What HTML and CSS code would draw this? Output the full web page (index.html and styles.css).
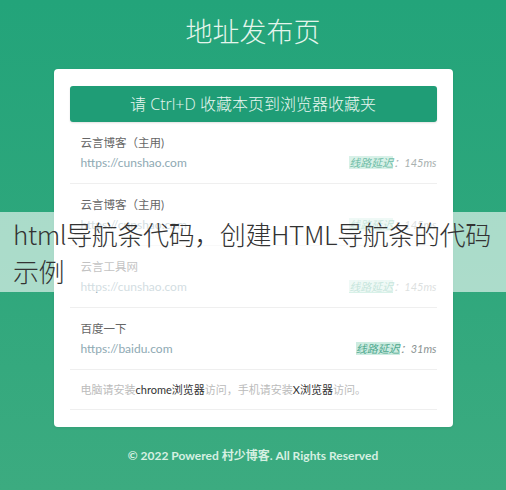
FILE: index.html
```html
<!DOCTYPE html>
<html lang="zh">
<head>
<meta charset="utf-8">
<title>地址发布页</title>
<link rel="stylesheet" href="styles.css">
</head>
<body>
<div class="page">
  <header class="title">地址发布页</header>
  <main class="card">
    <div class="btn">请 Ctrl+D 收藏本页到浏览器收藏夹</div>
    <div class="row">
      <div class="name">云言博客（主用)</div>
      <div class="line"><span class="url">https://cunshao.com</span><span class="lat"><span class="tag">线路延迟</span>：145ms</span></div>
    </div>
    <div class="row">
      <div class="name">云言博客（主用)</div>
      <div class="line"><span class="url">https://cunshao.com</span><span class="lat"><span class="tag">线路延迟</span>：145ms</span></div>
    </div>
    <div class="row">
      <div class="name">云言工具网</div>
      <div class="line"><span class="url">https://cunshao.com</span><span class="lat"><span class="tag">线路延迟</span>：145ms</span></div>
    </div>
    <div class="row">
      <div class="name">百度一下</div>
      <div class="line"><span class="url">https://baidu.com</span><span class="lat strong"><span class="tag">线路延迟</span>：31ms</span></div>
    </div>
    <div class="note">电脑请安装<b>chrome浏览器</b>访问，手机请安装<b>X浏览器</b>访问。</div>
  </main>
  <footer class="foot">© 2022 Powered 村少博客. All Rights Reserved</footer>
  <div class="overlay">html导航条代码，创建HTML导航条的代码示例</div>
</div>
</body>
</html>
```
FILE: styles.css
```css
html, body {
  margin: 0;
  padding: 0;
}
body {
  width: 506px;
  height: 490px;
  overflow: hidden;
  font-family: Lato, "Noto Sans CJK SC", sans-serif;
  background: linear-gradient(180deg, #23a47a 0%, #2ea77c 50%, #3cab80 100%);
}
.page {
  position: relative;
  height: 490px;
  display: flex;
  flex-direction: column;
  align-items: center;
}
.title {
  height: 69px;
  line-height: 62px;
  font-size: 27px;
  color: #e4f5ec;
  font-family: "Noto Sans CJK SC", sans-serif;
  font-weight: 300;
}
.card {
  width: 367px;
  background: #fff;
  border-radius: 4px;
  padding: 17px 16px 17px 16px;
  box-shadow: 0 1px 3px rgba(0,0,0,0.08);
}
.btn {
  height: 36px;
  line-height: 36px;
  background: #1f9d76;
  border-radius: 3px;
  color: #e9f7f1;
  font-size: 16px;
  text-align: center;
  box-shadow: 0 1px 2px rgba(0,0,0,0.12);
  font-family: "Open Sans", "Noto Sans CJK SC", sans-serif;
  font-weight: 300;
}
.row {
  height: 62px;
  box-sizing: border-box;
  padding: 13px 0 13px 11px;
  border-bottom: 1px solid #efefef;
  display: flex;
  flex-direction: column;
  gap: 4px;
}
.name {
  height: 16px;
  line-height: 16px;
  font-size: 11.5px;
  color: #666;
}
.line {
  height: 16px;
  line-height: 16px;
  display: flex;
  justify-content: space-between;
  align-items: center;
}
.url {
  font-size: 12px;
  color: #8ea9b3;
}
.lat {
  font-size: 11px;
  font-style: italic;
  color: #a9b1b0;
}
.tag {
  color: #6fbda7;
  background: #d8f1e8;
}
.lat.strong {
  color: #8b9493;
}
.lat.strong .tag {
  color: #4ea88e;
  background: #cdece1;
}
.note {
  height: 40px;
  box-sizing: border-box;
  padding: 12px 0 12px 11px;
  line-height: 16px;
  font-size: 11px;
  color: #bbb;
  border-bottom: 1px solid #efefef;
}
.note b {
  font-weight: normal;
  color: #333;
}
.foot {
  margin-top: 20px;
  font-size: 12px;
  font-weight: bold;
  color: #d6f0e2;
  line-height: 18px;
}
.overlay {
  position: absolute;
  left: 0;
  top: 212px;
  width: 506px;
  height: 80px;
  box-sizing: border-box;
  padding: 3px 0 0 13px;
  background: rgba(255,255,255,0.6);
  color: #333;
  font-size: 26px;
  line-height: 37px;
  letter-spacing: -0.4px;
  font-family: "Noto Sans CJK SC", sans-serif;
  font-weight: 300;
}
```
